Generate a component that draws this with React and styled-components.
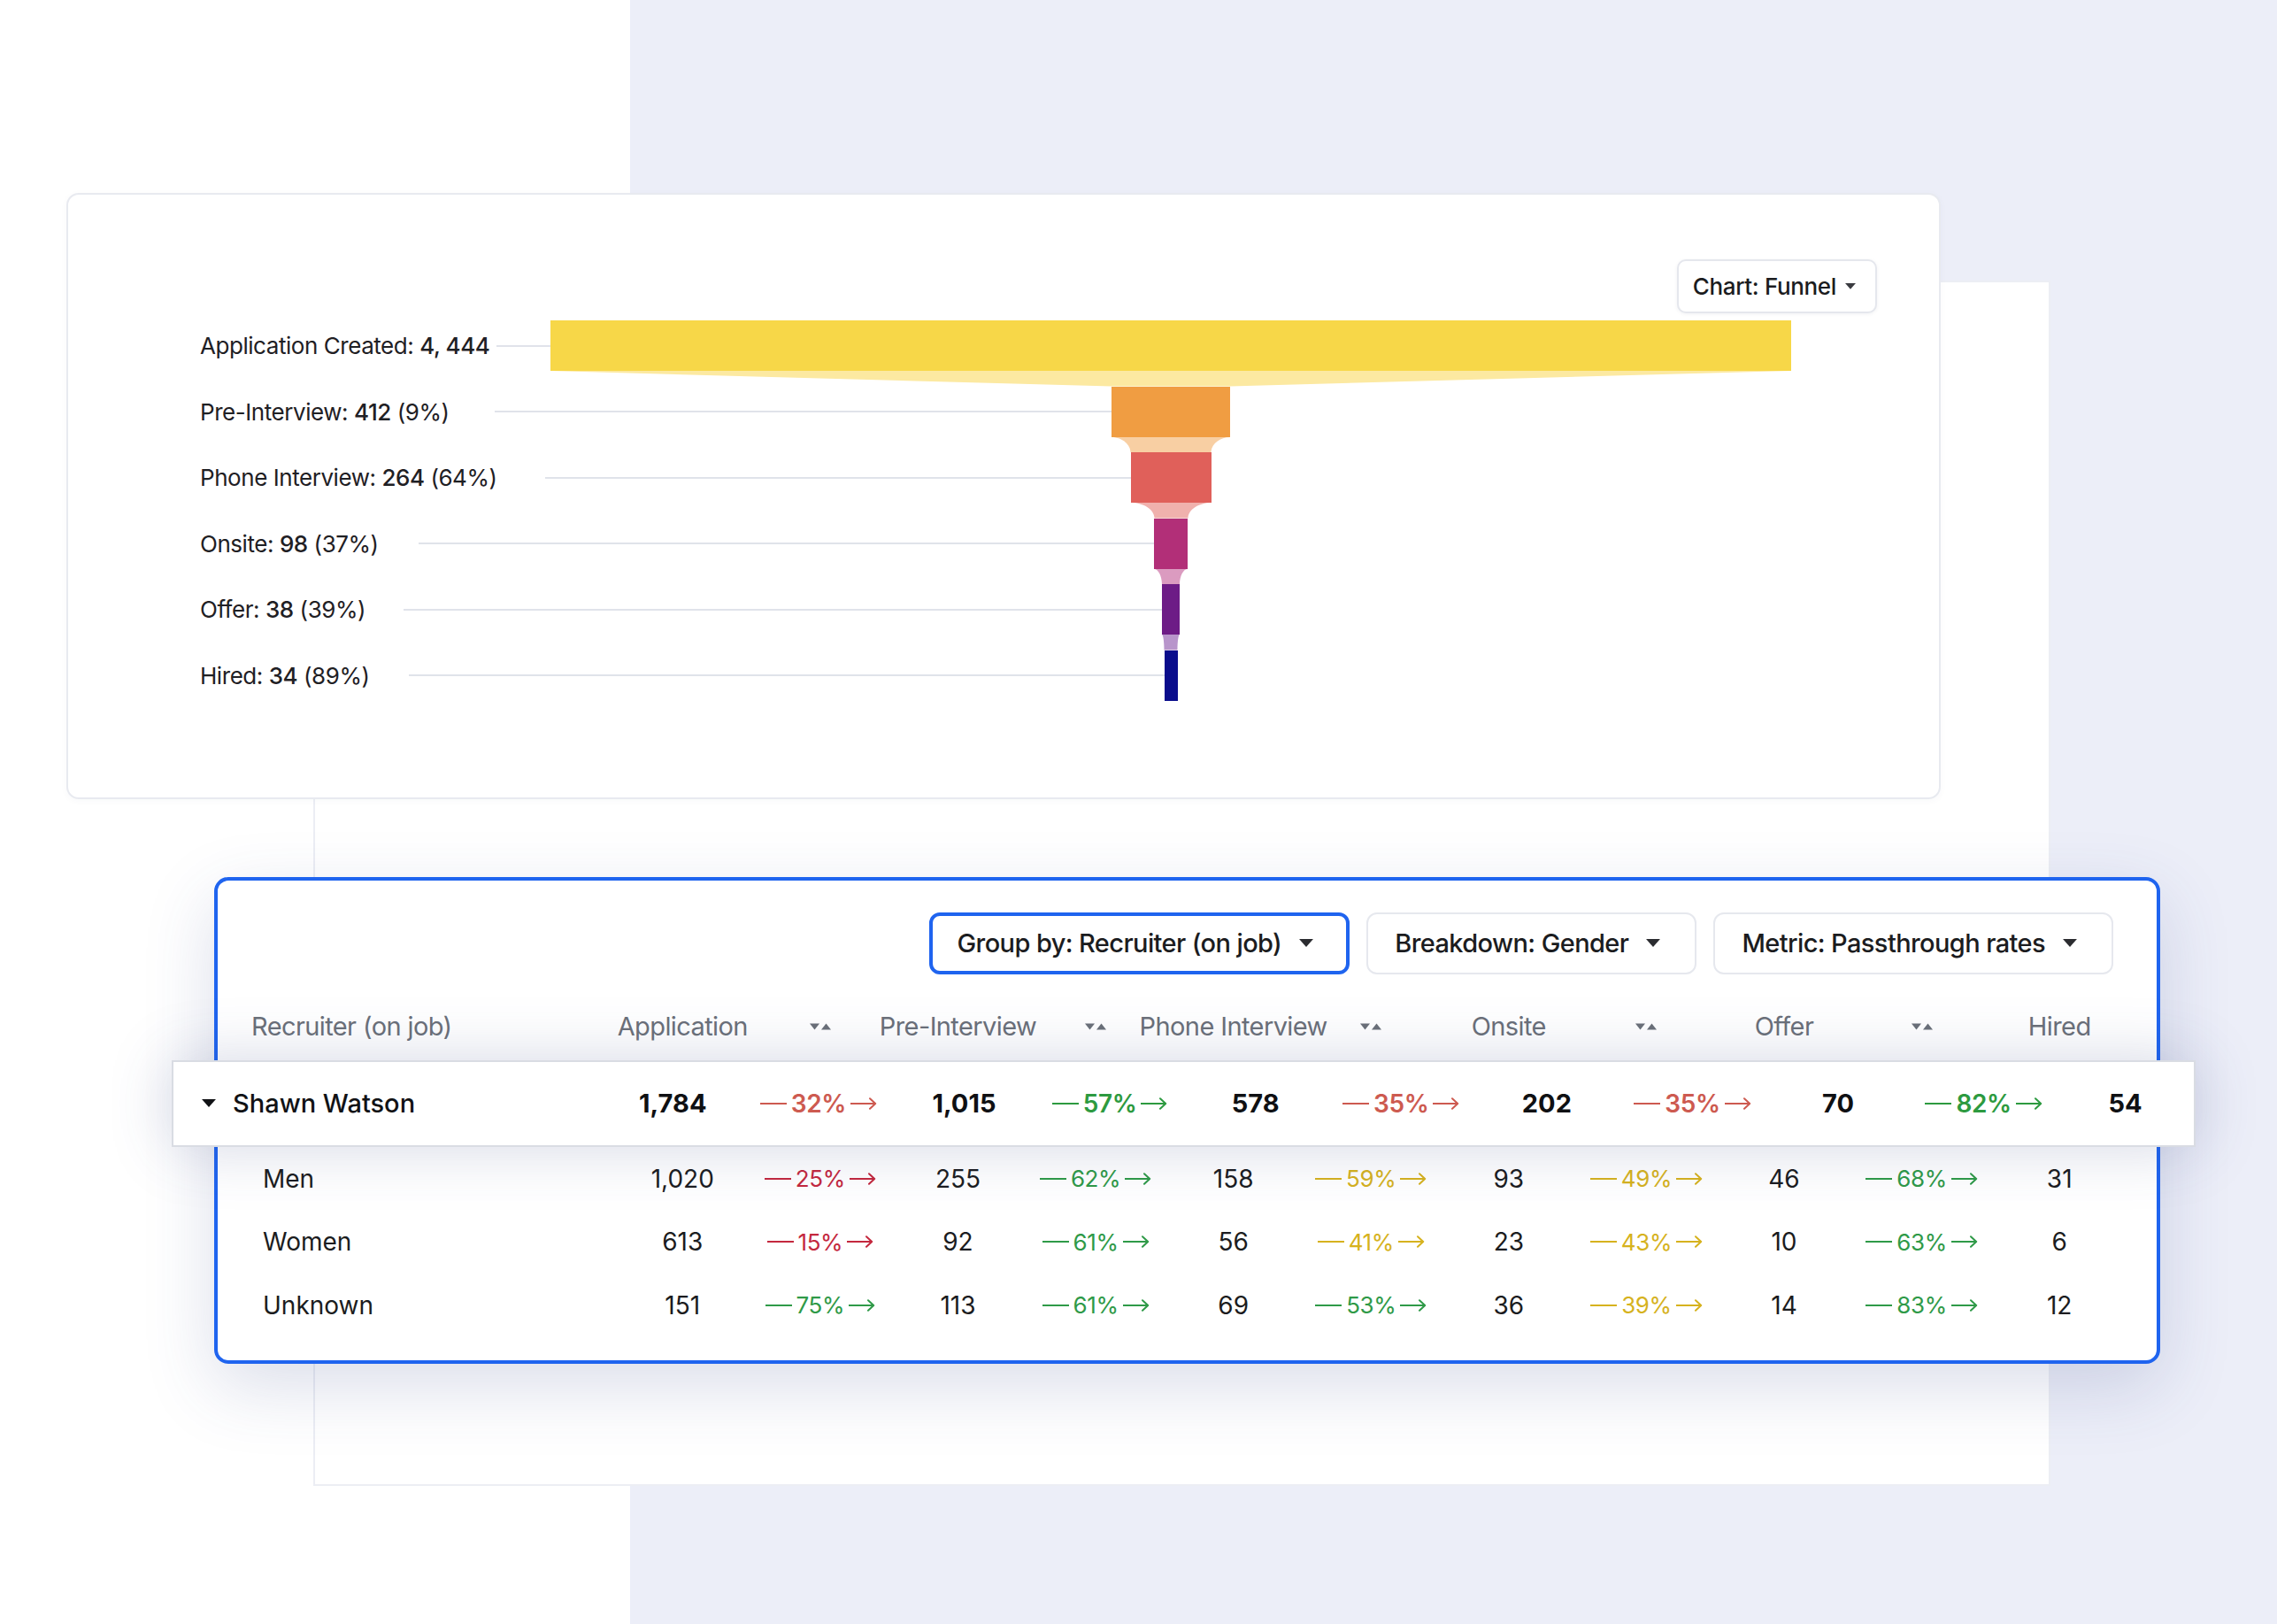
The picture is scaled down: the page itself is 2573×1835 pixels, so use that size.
import React from "react";
import styled, { createGlobalStyle } from "styled-components";

const GlobalStyle = createGlobalStyle`
  * { box-sizing: border-box; }
  html, body { margin: 0; padding: 0; }
  body {
    font-family: Inter, "Noto Sans", "Liberation Sans", sans-serif;
    color: #1b1c20;
    -webkit-font-smoothing: antialiased;
  }
`;

// funnel geometry: the bars are centred on a common axis, HALF is the
// distance from that axis to the right edge of the chart area
const HALF = 798;
const BAR_H = 57;
const LINK_H = 17.6;

const stages = [
  { name: "Application Created:", value: "4, 444", width: 1402, color: "#f7d748", link: "#fce9a1", gap: 8 },
  { name: "Pre-Interview:", value: "412", pct: "(9%)", width: 134, color: "#f09d42", link: "#f8cfa3", gap: 51 },
  { name: "Phone Interview:", value: "264", pct: "(64%)", width: 91, color: "#e0605a", link: "#f0b1ad", gap: 54 },
  { name: "Onsite:", value: "98", pct: "(37%)", width: 38, color: "#b22f78", link: "#db9bc0", gap: 45 },
  { name: "Offer:", value: "38", pct: "(39%)", width: 20, color: "#6d1c86", link: "#b895cb", gap: 43 },
  { name: "Hired:", value: "34", pct: "(89%)", width: 15, color: "#0a0d8c", gap: 44 },
];

const columns = ["Application", "Pre-Interview", "Phone Interview", "Onsite", "Offer", "Hired"];

const tone = {
  red: "#cd5a50",
  green: "#2d9a40",
  crimson: "#c4283e",
  leaf: "#2f9a48",
  yellow: "#d6b21e",
};

const recruiter = {
  name: "Shawn Watson",
  values: ["1,784", "1,015", "578", "202", "70", "54"],
  rates: [
    ["32%", "red"],
    ["57%", "green"],
    ["35%", "red"],
    ["35%", "red"],
    ["82%", "green"],
  ],
};

const breakdown = [
  {
    name: "Men",
    values: ["1,020", "255", "158", "93", "46", "31"],
    rates: [["25%", "crimson"], ["62%", "leaf"], ["59%", "yellow"], ["49%", "yellow"], ["68%", "leaf"]],
  },
  {
    name: "Women",
    values: ["613", "92", "56", "23", "10", "6"],
    rates: [["15%", "crimson"], ["61%", "leaf"], ["41%", "yellow"], ["43%", "yellow"], ["63%", "leaf"]],
  },
  {
    name: "Unknown",
    values: ["151", "113", "69", "36", "14", "12"],
    rates: [["75%", "leaf"], ["61%", "leaf"], ["53%", "leaf"], ["39%", "yellow"], ["83%", "leaf"]],
  },
];

const Page = styled.div`
  width: 2573px;
  height: 1835px;
  padding: 317px 0 0 354px;
  background: linear-gradient(90deg, #ffffff 0, #ffffff 712px, #eceef8 712px);
  overflow: hidden;
`;

const Sheet = styled.div`
  width: 1963px;
  height: 1362px;
  background: #ffffff;
  border: 2px solid #eceef4;
  display: flex;
  flex-direction: column;
`;

const ChartCard = styled.section`
  width: 2118px;
  margin: -101px 0 0 -281px;
  padding: 73px 70px 109px 149px;
  background: #ffffff;
  border: 2px solid #e8eaf0;
  border-radius: 14px;
  box-shadow: 0 2px 8px rgba(40, 50, 90, 0.03);
`;

const ChartToolbar = styled.div`
  display: flex;
  justify-content: flex-end;
  margin-bottom: 8px;
`;

const ChartButton = styled.button`
  height: 61px;
  display: inline-flex;
  align-items: center;
  gap: 10px;
  padding: 0 22px 0 16px;
  background: #ffffff;
  border: 2px solid #e5e7ed;
  border-radius: 10px;
  box-shadow: 0 1px 4px rgba(20, 30, 60, 0.06);
  font-family: inherit;
  font-size: 26px;
  font-weight: 500;
  letter-spacing: -0.35px;
  color: #1b1c20;
`;

const Funnel = styled.div`
  display: flex;
  flex-direction: column;
`;

const StageRow = styled.div`
  display: flex;
  align-items: center;
  height: ${BAR_H}px;
`;

const StageLabel = styled.span`
  font-size: 26px;
  letter-spacing: -0.45px;
  white-space: nowrap;
  color: #1f2024;
  b {
    font-weight: 500;
  }
`;

const Leader = styled.span`
  flex: 1;
  height: 2px;
  margin-left: ${(p) => p.$gap}px;
  background: #e0e3ea;
`;

const Bar = styled.span`
  align-self: stretch;
  flex: none;
  background: ${(p) => p.$color};
`;

const Filler = styled.span`
  flex: none;
`;

const LinkRow = styled.div`
  display: flex;
  justify-content: flex-end;
  height: ${LINK_H}px;
  svg {
    display: block;
    flex: none;
  }
`;

const TableCard = styled.section`
  width: 2199px;
  margin: 88px 0 0 -114px;
  padding: 36px 0 27px;
  background: #ffffff;
  border: 4px solid #1f64ef;
  border-radius: 16px;
  box-shadow: 0 26px 80px rgba(55, 70, 140, 0.18);
`;

const Toolbar = styled.div`
  display: flex;
  justify-content: flex-end;
  gap: 19px;
  padding-right: 49px;
`;

const FilterButton = styled.button`
  height: 70px;
  display: inline-flex;
  align-items: center;
  gap: 20px;
  padding: 0 ${(p) => (p.$active ? 37 : 39)}px 0 ${(p) => (p.$active ? 28 : 30)}px;
  background: #ffffff;
  border: ${(p) => (p.$active ? "4px solid #1f64ef" : "2px solid #e6e8ee")};
  border-radius: 12px;
  font-family: inherit;
  font-size: 29px;
  font-weight: 500;
  letter-spacing: -0.6px;
  color: #1b1c20;
`;

const GridRow = styled.div`
  display: grid;
  grid-template-columns: 1fr repeat(11, 155.6px);
  align-items: center;
  padding: 0 32px 0 38px;
`;

const HeaderRow = styled(GridRow)`
  height: 76px;
  margin-top: 21px;
  font-size: 29px;
  letter-spacing: -0.6px;
  color: #6b7079;
`;

const HeaderCell = styled.span`
  justify-self: ${(p) => (p.$left ? "start" : "center")};
  white-space: nowrap;
`;

const SortCell = styled.span`
  justify-self: center;
  display: flex;
  color: #6b7079;
`;

const RecruiterRow = styled.div`
  position: relative;
  z-index: 1;
  display: grid;
  grid-template-columns: 450px repeat(10, 164.6px) 1fr;
  align-items: center;
  height: 98px;
  margin: 0 -44px 0 -52px;
  padding-left: 32px;
  background: #ffffff;
  border: 2px solid #d9dce3;
  box-shadow: 0 0 70px rgba(60, 72, 130, 0.22);
`;

const RecruiterName = styled.span`
  display: flex;
  align-items: center;
  gap: 19px;
  font-size: 29px;
  font-weight: 500;
  color: #111215;
`;

const SubRow = styled(GridRow)`
  height: 71.5px;
  font-size: 28px;
  &:first-of-type {
    margin-top: 1px;
  }
`;

const SubName = styled.span`
  padding-left: 13px;
  color: #1b1c20;
`;

const Value = styled.span`
  justify-self: center;
  font-size: ${(p) => (p.$strong ? 29 : 28)}px;
  font-weight: ${(p) => (p.$strong ? 700 : 400)};
  color: ${(p) => (p.$strong ? "#0f1013" : "#1b1c20")};
`;

const Rate = styled.span`
  justify-self: center;
  display: inline-flex;
  align-items: center;
  gap: 5px;
  font-size: ${(p) => (p.$strong ? 28 : 26)}px;
  font-weight: ${(p) => (p.$strong ? 600 : 400)};
  letter-spacing: -0.4px;
  color: ${(p) => p.$color};
  white-space: nowrap;
`;

const Dash = styled.span`
  width: 30px;
  height: 2px;
  background: currentColor;
`;

function Caret({ size = 16, color = "#2b2c30" }) {
  return (
    <svg width={size} height={size * 0.56} viewBox="0 0 16 9">
      <polygon points="0,0 16,0 8,9" fill={color} />
    </svg>
  );
}

function SortIcon() {
  return (
    <svg width="24" height="8" viewBox="0 0 24 8">
      <polygon points="0,0.5 11,0.5 5.5,7.5" fill="currentColor" />
      <polygon points="13,7.5 24,7.5 18.5,0.5" fill="currentColor" />
    </svg>
  );
}

function Arrow() {
  return (
    <svg width="30" height="14" viewBox="0 0 30 14" fill="none">
      <path d="M0 7H28M22 1.2L28.2 7L22 12.8" stroke="currentColor" strokeWidth="2" strokeLinecap="round" strokeLinejoin="round" />
    </svg>
  );
}

function PassRate({ value, color, strong }) {
  return (
    <Rate $color={tone[color]} $strong={strong}>
      <Dash />
      {value}
      <Arrow />
    </Rate>
  );
}

function StageLink({ top, bottom, color, straight }) {
  const a = (top - bottom) / 2;
  const h = LINK_H;
  const d = straight
    ? `M0 0H${top}L${top - a} ${h}H${a}Z`
    : `M0 0H${top}C${top - a * 0.55} 0 ${top - a} ${h * 0.45} ${top - a} ${h}H${a}C${a} ${h * 0.45} ${a * 0.55} 0 0 0Z`;
  return (
    <LinkRow>
      <svg width={top} height={h} viewBox={`0 0 ${top} ${h}`}>
        <path d={d} fill={color} />
      </svg>
      <Filler style={{ width: HALF - top / 2 }} />
    </LinkRow>
  );
}

function FunnelChart() {
  return (
    <Funnel>
      {stages.map((s, i) => (
        <React.Fragment key={s.name}>
          <StageRow>
            <StageLabel>
              {s.name} <b>{s.value}</b>
              {s.pct ? ` ${s.pct}` : ""}
            </StageLabel>
            <Leader $gap={s.gap} />
            <Bar $color={s.color} style={{ width: s.width }} />
            <Filler style={{ width: HALF - s.width / 2 }} />
          </StageRow>
          {i < stages.length - 1 && (
            <StageLink top={s.width} bottom={stages[i + 1].width} color={s.link} straight={i === 0} />
          )}
        </React.Fragment>
      ))}
    </Funnel>
  );
}

function Cells({ row, strong }) {
  return row.values.map((v, i) => (
    <React.Fragment key={i}>
      <Value $strong={strong}>{v}</Value>
      {row.rates[i] && <PassRate value={row.rates[i][0]} color={row.rates[i][1]} strong={strong} />}
    </React.Fragment>
  ));
}

export default function App() {
  return (
    <>
      <GlobalStyle />
      <Page>
        <Sheet>
          <ChartCard>
            <ChartToolbar>
              <ChartButton>
                Chart: Funnel
                <Caret size={12} color="#3a3b40" />
              </ChartButton>
            </ChartToolbar>
            <FunnelChart />
          </ChartCard>

          <TableCard>
            <Toolbar>
              <FilterButton $active>
                Group by: Recruiter (on job)
                <Caret />
              </FilterButton>
              <FilterButton>
                Breakdown: Gender
                <Caret />
              </FilterButton>
              <FilterButton>
                Metric: Passthrough rates
                <Caret />
              </FilterButton>
            </Toolbar>

            <HeaderRow>
              <HeaderCell $left>Recruiter (on job)</HeaderCell>
              {columns.map((c, i) => (
                <React.Fragment key={c}>
                  <HeaderCell>{c}</HeaderCell>
                  {i < columns.length - 1 && (
                    <SortCell>
                      <SortIcon />
                    </SortCell>
                  )}
                </React.Fragment>
              ))}
            </HeaderRow>

            <RecruiterRow>
              <RecruiterName>
                <Caret color="#111215" />
                {recruiter.name}
              </RecruiterName>
              <Cells row={recruiter} strong />
            </RecruiterRow>

            {breakdown.map((r) => (
              <SubRow key={r.name}>
                <SubName>{r.name}</SubName>
                <Cells row={r} />
              </SubRow>
            ))}
          </TableCard>
        </Sheet>
      </Page>
    </>
  );
}
